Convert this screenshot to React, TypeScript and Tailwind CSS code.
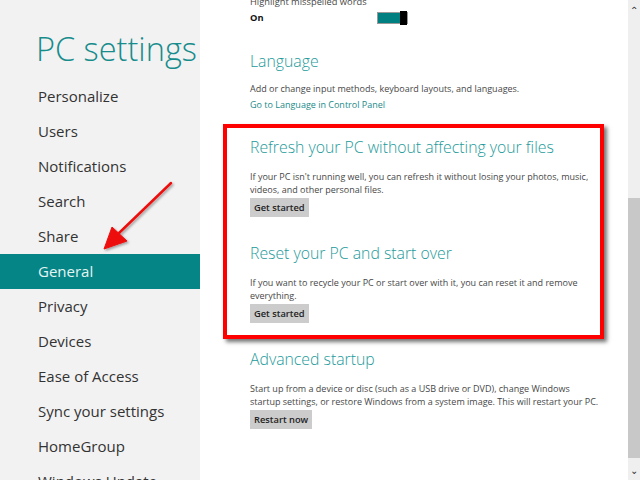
import React from "react";

const NAV = [
  "Personalize",
  "Users",
  "Notifications",
  "Search",
  "Share",
  "General",
  "Privacy",
  "Devices",
  "Ease of Access",
  "Sync your settings",
  "HomeGroup",
  "Windows Update",
];

const GrayButton: React.FC<{ label: string }> = ({ label }) => (
  <button className="block h-[19px] px-[4px] bg-[#cccccc] text-[9.3px] font-semibold text-[#222] leading-[19px] whitespace-nowrap">
    {label}
  </button>
);

const Section: React.FC<{ title: string; lines: string[]; action: string; top: string }> = ({
  title,
  lines,
  action,
  top,
}) => (
  <div className={top}>
    <h2 className="h-[26px] text-[15.8px] leading-[26px] font-light text-[#239a9a] whitespace-nowrap">{title}</h2>
    <p className="mt-[10px] text-[9px] leading-[13px] text-[#474747] whitespace-nowrap">
      {lines.map((l, i) => (
        <span key={i} className="block">
          {l}
        </span>
      ))}
    </p>
    <div className="mt-[2px] flex">
      <GrayButton label={action} />
    </div>
  </div>
);

export default function App() {
  return (
    <div
      className="relative w-[640px] h-[480px] overflow-hidden flex bg-white"
      style={{ fontFamily: '"Segoe UI", "Open Sans", sans-serif' }}
    >
      {/* Sidebar */}
      <aside className="w-[200px] shrink-0 bg-[#f2f2f2] flex flex-col">
        <div className="h-[79px] shrink-0 pl-[36px] pt-[29px]">
          <h1 className="text-[32.5px] leading-[40px] font-light text-[#178c8c] whitespace-nowrap">PC settings</h1>
        </div>
        <nav className="flex flex-col">
          {NAV.map((item) => (
            <div
              key={item}
              className={
                item === "General"
                  ? "h-[35px] shrink-0 pl-[38px] flex items-center text-[15px] bg-[#058585] text-[#e6f4f4] whitespace-nowrap"
                  : "h-[35px] shrink-0 pl-[38px] flex items-center text-[15px] text-[#333] whitespace-nowrap"
              }
            >
              {item}
            </div>
          ))}
        </nav>
      </aside>

      {/* Content */}
      <main className="flex-1 pl-[50px] text-[#474747]">
        <div className="-mt-[5px]">
          <div className="text-[9.3px] leading-[14px] whitespace-nowrap">Highlight misspelled words</div>
          <div className="mt-[2px] flex items-center">
            <span className="w-[127px] text-[9.3px] leading-[14px] font-bold text-[#111]">On</span>
            <div className="flex items-center h-[12px] w-[31px] border border-[#999] bg-[#008080]">
              <div className="ml-auto h-[14px] w-[7px] bg-black" />
            </div>
          </div>
        </div>

        <div className="mt-[23px]">
          <h2 className="h-[26px] text-[15.8px] leading-[26px] font-light text-[#239a9a]">Language</h2>
          <p className="mt-[8px] text-[9px] leading-[14px] whitespace-nowrap">
            Add or change input methods, keyboard layouts, and languages.
          </p>
          <a className="block mt-[2px] text-[9px] leading-[14px] text-[#1b8a8a] whitespace-nowrap">
            Go to Language in Control Panel
          </a>
        </div>

        <Section
          top="mt-[22px]"
          title="Refresh your PC without affecting your files"
          lines={[
            "If your PC isn't running well, you can refresh it without losing your photos, music,",
            "videos, and other personal files.",
          ]}
          action="Get started"
        />
        <Section
          top="mt-[23px]"
          title="Reset your PC and start over"
          lines={["If you want to recycle your PC or start over with it, you can reset it and remove", "everything."]}
          action="Get started"
        />
        <Section
          top="mt-[23px]"
          title="Advanced startup"
          lines={[
            "Start up from a device or disc (such as a USB drive or DVD), change Windows",
            "startup settings, or restore Windows from a system image. This will restart your PC.",
          ]}
          action="Restart now"
        />
      </main>

      {/* Scrollbar */}
      <div className="w-[12px] shrink-0 bg-[#efefef] flex flex-col items-center">
        <span className="h-[20px] flex items-center text-[10px] text-[#333]">⌃</span>
        <div className="mt-[178px] h-[260px] w-full bg-[#c8c8c8]" />
        <span className="mt-auto h-[20px] flex items-center text-[10px] text-[#333]">⌄</span>
      </div>

      {/* Annotations */}
      <div className="absolute left-[223px] top-[124px] w-[381px] h-[215px] border-[4px] border-[#ff0000] shadow-[3px_3px_4px_rgba(0,0,0,0.55)] pointer-events-none" />
      <svg className="absolute left-0 top-0 pointer-events-none" width="640" height="480">
        <defs>
          <filter id="sh" x="-20%" y="-20%" width="140%" height="140%">
            <feDropShadow dx="1.5" dy="1.5" stdDeviation="1" floodColor="#000" floodOpacity="0.35" />
          </filter>
        </defs>
        <g filter="url(#sh)" fill="#ee1111" stroke="#ee1111">
          <line x1="171" y1="183" x2="118" y2="234" strokeWidth="2.5" strokeLinecap="round" />
          <polygon points="104,249 112,227 127,241" strokeWidth="1" strokeLinejoin="round" />
        </g>
      </svg>
    </div>
  );
}
